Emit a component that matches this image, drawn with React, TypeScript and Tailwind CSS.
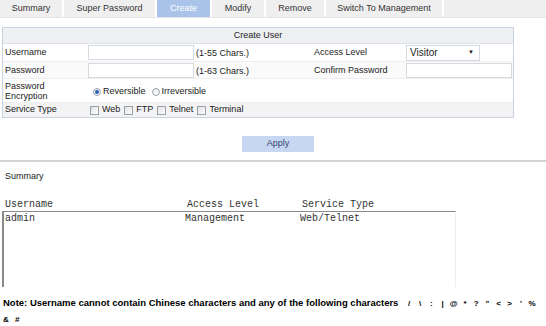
import React from 'react';

const tabs = [
  { label: 'Summary', w: 'w-[64px]' },
  { label: 'Super Password', w: 'w-[93px]' },
  { label: 'Create', w: 'w-[55px]' },
  { label: 'Modify', w: 'w-[54px]' },
  { label: 'Remove', w: 'w-[60px]' },
  { label: 'Switch To Management', w: 'w-[118px]' },
];

const specialChars = ['/', '\\', ':', '|', '@', '*', '?', '"', '<', '>', "'", '%'];

function Radio({ checked }: { checked?: boolean }) {
  return (
    <span className="inline-flex h-[8px] w-[8px] items-center justify-center rounded-full border border-[#9aa3ad] bg-gradient-to-b from-[#e8eaec] to-white">
      {checked && <span className="h-[4px] w-[4px] rounded-full bg-[#2f5fb0]" />}
    </span>
  );
}

function Checkbox() {
  return <span className="inline-block h-[9px] w-[9px] border border-[#9aa0a6] bg-gradient-to-br from-[#dfe1e3] to-white" />;
}

function TextInput({ w }: { w: string }) {
  return <div className={`${w} h-[15px] border border-[#d6d9dd] bg-white`} />;
}

export default function App() {
  return (
    <div className="w-[546px] h-[326px] overflow-hidden bg-white text-[9px] text-[#222] font-['Liberation_Sans',Arial,sans-serif]">
      {/* tab bar */}
      <div className="flex h-[18px] bg-[#efefef] border-b border-[#e4e4e4]">
        {tabs.map((t) => (
          <div
            key={t.label}
            className={`${t.w} flex items-center justify-center border-r-2 border-white ${
              t.label === 'Create' ? 'bg-[#a9c4e8] text-white' : 'text-[#333]'
            }`}
          >
            {t.label}
          </div>
        ))}
        <div className="flex-1" />
      </div>

      {/* create user panel */}
      <div className="ml-[2px] mt-[9px] w-[512px] border border-[#c9d3e0]">
        <div className="flex h-[16px] items-center justify-center bg-[#eef0f2] border-b border-[#dde2e8]">Create User</div>
        <div className="grid grid-cols-[85px_108px_118px_92px_1fr] items-center h-[18px] border-b border-[#eceef0]">
          <div className="pl-[2px]">Username</div>
          <TextInput w="w-[106px]" />
          <div className="pt-[3px]">(1-55 Chars.)</div>
          <div>Access Level</div>
          <div className="flex h-[16px] w-[74px] items-center justify-between border border-[#d6d9dd] bg-white pl-[3px] pr-[5px] text-[10px]">
            <span>Visitor</span>
            <span className="text-[6px]">▼</span>
          </div>
        </div>
        <div className="grid grid-cols-[85px_108px_118px_92px_1fr] items-center h-[17px] border-b border-[#eceef0] bg-[#fafafa]">
          <div className="pl-[2px]">Password</div>
          <TextInput w="w-[106px]" />
          <div className="pt-[3px]">(1-63 Chars.)</div>
          <div>Confirm Password</div>
          <TextInput w="w-[106px]" />
        </div>
        <div className="grid grid-cols-[85px_1fr] items-center h-[24px] border-b border-[#eceef0]">
          <div className="pl-[2px] leading-[10px]">
            Password
            <br />
            Encryption
          </div>
          <div className="flex items-center pl-[5px] pt-[2px]">
            <Radio checked />
            <span className="ml-[2px] mr-[6px]">Reversible</span>
            <Radio />
            <span className="ml-[2px]">Irreversible</span>
          </div>
        </div>
        <div className="grid grid-cols-[85px_1fr] items-center h-[14px] bg-[#f3f3f3]">
          <div className="pl-[2px]">Service Type</div>
          <div className="flex items-center pl-[2px]">
            <Checkbox />
            <span className="ml-[3px] mr-[4px]">Web</span>
            <Checkbox />
            <span className="ml-[3px] mr-[4px]">FTP</span>
            <Checkbox />
            <span className="ml-[3px] mr-[4px]">Telnet</span>
            <Checkbox />
            <span className="ml-[3px]">Terminal</span>
          </div>
        </div>
      </div>

      {/* apply */}
      <div className="mt-[18px] flex justify-start pl-[242px]">
        <button className="h-[16px] w-[72px] bg-[#c7d7f2] text-[9px] text-[#34466e]">Apply</button>
      </div>
      <div className="mt-[8px] h-[2px] bg-[#d3d3d3]" />

      {/* summary */}
      <div className="mt-[8px] pl-[5px]">Summary</div>

      <div className="mt-[14px] w-[456px] font-['Liberation_Mono',monospace] text-[10px] text-[#333]">
        <div className="grid grid-cols-[182px_115px_1fr] pl-[5px] leading-[13px]">
          <span>Username</span>
          <span>Access Level</span>
          <span>Service Type</span>
        </div>
        <div className="ml-[2px] h-[76px] border-t border-l-2 border-r border-t-[#8a8a8a] border-l-[#8a8a8a] border-r-[#ededed]">
          <div className="grid grid-cols-[180px_115px_1fr] pl-[1px] pt-[1px] leading-[12px]">
            <span>admin</span>
            <span>Management</span>
            <span>Web/Telnet</span>
          </div>
        </div>
      </div>

      {/* note */}
      <div className="mt-[8px] pl-[3px] text-[9.5px] font-bold leading-[15px] text-black">
        <div className="whitespace-nowrap">
          Note: Username cannot contain Chinese characters and any of the following characters
          <span className="inline-block w-[5px]" />
          {specialChars.map((c, i) => (
            <span key={i} className="inline-block w-[11.2px] text-center text-[8px]">
              {c}
            </span>
          ))}
        </div>
        <div>
          <span className="inline-block w-[12px] text-[8px]">&amp;</span>
          <span className="inline-block w-[11px] text-[8px]">#</span>
        </div>
      </div>
    </div>
  );
}
